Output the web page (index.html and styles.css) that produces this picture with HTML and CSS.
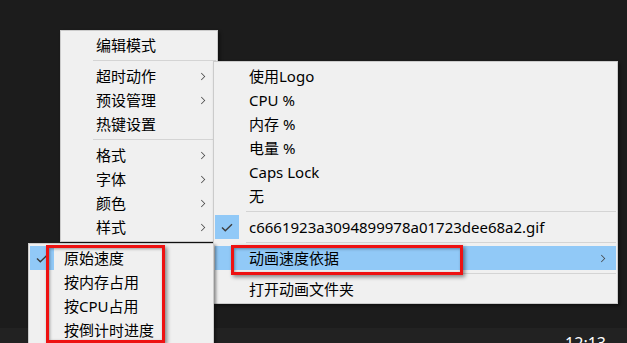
FILE: index.html
```html
<!DOCTYPE html>
<html lang="zh-CN">
<head>
    <meta charset="UTF-8">
    <title>菜单</title>
    <link rel="stylesheet" href="styles.css">
</head>
<body>
    <div class="desktop">
        <!-- 主菜单 -->
        <div class="menu menu-main">
            <div class="item"><span class="label">编辑模式</span></div>
            <div class="sep"></div>
            <div class="item"><span class="label">超时动作</span><span class="arrow"></span></div>
            <div class="item"><span class="label">预设管理</span><span class="arrow"></span></div>
            <div class="item"><span class="label">热键设置</span></div>
            <div class="sep"></div>
            <div class="item"><span class="label">格式</span><span class="arrow"></span></div>
            <div class="item"><span class="label">字体</span><span class="arrow"></span></div>
            <div class="item"><span class="label">颜色</span><span class="arrow"></span></div>
            <div class="item"><span class="label">样式</span><span class="arrow"></span></div>
        </div>

        <!-- 样式子菜单 -->
        <div class="menu menu-sub">
            <div class="item"><span class="label">使用Logo</span></div>
            <div class="item"><span class="label">CPU %</span></div>
            <div class="item"><span class="label">内存 %</span></div>
            <div class="item"><span class="label">电量 %</span></div>
            <div class="item"><span class="label">Caps Lock</span></div>
            <div class="item"><span class="label">无</span></div>
            <div class="sep"></div>
            <div class="item checked"><span class="check"><svg width="12" height="9" viewBox="0 0 12 9"><polyline points="1,4.5 4.3,7.8 11,1.2" fill="none" stroke="#3c3c3c" stroke-width="1.4"/></svg></span><span class="label">c6661923a3094899978a01723dee68a2.gif</span></div>
            <div class="sep"></div>
            <div class="item active"><span class="label">动画速度依据</span><span class="arrow"></span></div>
            <div class="sep"></div>
            <div class="item"><span class="label">打开动画文件夹</span></div>
        </div>

        <!-- 动画速度子菜单 -->
        <div class="menu menu-speed">
            <div class="item checked"><span class="check"><svg width="12" height="9" viewBox="0 0 12 9"><polyline points="1,4.5 4.3,7.8 11,1.2" fill="none" stroke="#3c3c3c" stroke-width="1.4"/></svg></span><span class="label">原始速度</span></div>
            <div class="item"><span class="label">按内存占用</span></div>
            <div class="item"><span class="label">按CPU占用</span></div>
            <div class="item"><span class="label">按倒计时进度</span></div>
        </div>

        <!-- 标注框 -->
        <div class="mark mark-sub"></div>
        <div class="mark mark-speed"></div>

        <div class="taskbar">
            <span class="clock">12:13</span>
        </div>
    </div>
</body>
</html>
```

FILE: styles.css
```css
* {
    margin: 0;
    padding: 0;
    box-sizing: border-box;
}

body {
    font-family: 'Noto Sans', 'Noto Sans CJK SC', sans-serif;
    background: #1c1c1c;
    width: 627px;
    height: 343px;
    overflow: hidden;
}

.desktop {
    position: relative;
    width: 627px;
    height: 343px;
}

.menu {
    position: absolute;
    background: #f0f0f0;
    border: 1px solid #cbcbcb;
    padding: 2px 1px;
    box-shadow: 2px 2px 3px rgba(0,0,0,0.45);
    color: #000;
    font-size: 15px;
}

.menu-main {
    left: 60px;
    top: 30px;
    width: 158px;
    z-index: 1;
}

.menu-sub {
    left: 213px;
    top: 61px;
    width: 405px;
    z-index: 2;
}

.menu-speed {
    left: 28px;
    top: 243px;
    width: 186px;
    height: 120px;
    z-index: 3;
}

.item {
    display: flex;
    align-items: center;
    height: 24px;
    padding-left: 34px;
    position: relative;
    line-height: 24px;
}

.item .label {
    flex: 1;
    white-space: nowrap;
}

.item.active {
    background: #91c9f7;
}

.check {
    position: absolute;
    left: 0;
    top: 0;
    width: 24px;
    height: 24px;
    background: #91c9f7;
    display: flex;
    align-items: center;
    justify-content: center;
}

.arrow {
    width: 7px;
    height: 7px;
    margin-right: 11px;
    border-right: 1.5px solid #404040;
    border-top: 1.5px solid #404040;
    transform: rotate(45deg) scale(0.75);
}

.sep {
    height: 7px;
    margin-left: 31px;
    display: flex;
    align-items: center;
}

.sep::after {
    content: '';
    flex: 1;
    height: 1px;
    background: #d4d4d4;
}

.mark {
    position: absolute;
    border: 3px solid #ee1111;
    box-shadow: 2px 2px 4px rgba(0,0,0,0.45), inset 1px 1px 3px rgba(0,0,0,0.35);
    z-index: 5;
}

.mark-sub {
    left: 231px;
    top: 245px;
    width: 232px;
    height: 30px;
}

.mark-speed {
    left: 46px;
    top: 245px;
    width: 119px;
    height: 98px;
}

.taskbar {
    position: absolute;
    left: 0;
    top: 328px;
    width: 627px;
    height: 40px;
    background: #222222;
    display: flex;
    justify-content: flex-end;
}

.clock {
    color: #fff;
    font-family: 'Noto Sans', sans-serif;
    font-size: 16px;
    line-height: 22px;
    margin-top: 4px;
    margin-right: 21px;
}
```
